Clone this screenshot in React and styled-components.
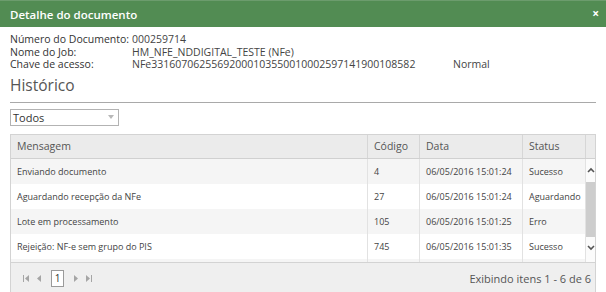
import React from 'react';
import styled, { createGlobalStyle } from 'styled-components';

const Global = createGlobalStyle`
  html, body { margin: 0; padding: 0; background: #fff; }
  body { font-family: "Open Sans", "Liberation Sans", sans-serif; color: #333; }
`;

const Dialog = styled.div`width: 606px; height: 292px; overflow: hidden; background: #fff;`;

const TitleBar = styled.div`
  display: flex; align-items: center; justify-content: space-between;
  height: 27px; padding: 0 7px 0 10px; background: #528c53; color: #fff;
  border-top: 1px solid #6c9c6d; box-sizing: border-box;
`;

const Title = styled.span`font-size: 11.5px; font-weight: 600;`;

const Close = styled.span`font-size: 12px; font-weight: 700; line-height: 1;`;

const Content = styled.div`padding: 6px 10px 0;`;

const Info = styled.div`
  display: grid; grid-template-columns: 122px 321px auto;
  font-size: 10.5px; line-height: 12.5px; color: #333; white-space: nowrap;
`;

const Label = styled.span``;
const Value = styled.span`color: #444;`;

const Heading = styled.h2`
  margin: 3px 0 0; padding-bottom: 6px; font-size: 15.5px; font-weight: 400;
  line-height: 22px; color: #555; border-bottom: 1px solid #a9a9a9;
`;

const Select = styled.div`
  display: flex; align-items: center; justify-content: space-between;
  width: 109px; height: 17px; margin-top: 6px; box-sizing: border-box;
  border: 1px solid #b3b3b3; padding: 0 4px 0 2px;
  font-size: 11px; color: #333;
`;

const Arrow = styled.span`
  width: 0; height: 0; border-left: 3px solid transparent; border-right: 3px solid transparent;
  border-top: 4px solid #b8b8b8;
`;

const Grid = styled.div`
  margin-top: 8px; border: 1px solid #d3d3d3; border-bottom: none;
`;

const cols = '356px 52px 103px 63px 1fr';

const HeadRow = styled.div`
  display: grid; grid-template-columns: ${cols}; height: 23px;
  background: #ebebeb; border-bottom: 1px solid #d0d0d0;
`;

const HeadCell = styled.div`
  display: flex; align-items: center; padding-left: 6px; font-size: 10.5px; color: #555;
  border-left: ${p => (p.first ? 'none' : '1px solid #d6d6d6')};
`;

const BodyWrap = styled.div`display: flex; height: 103px; overflow: hidden;`;

const Rows = styled.div`flex: 1;`;

const Row = styled.div`
  display: grid; grid-template-columns: 356px 52px 103px 63px; height: 25px;
  background: ${p => (p.alt ? '#f5f5f5' : '#fff')};
`;

const Cell = styled.div`
  display: flex; align-items: center; padding-left: 6px; font-size: 9px; color: #444;
  white-space: nowrap; overflow: hidden;
  border-left: ${p => (p.first ? 'none' : '1px solid #e2e2e2')};
`;

const Scrollbar = styled.div`
  display: flex; flex-direction: column; align-items: center; width: 11px;
  border-left: 1px solid #e2e2e2; background: #fbfbfb;
`;

const ScrollBtn = styled.div`
  display: flex; align-items: center; justify-content: center; height: 23px; width: 100%;
`;

const Thumb = styled.div`width: 100%; height: 55px; background: #cdcdcd;`;

const Footer = styled.div`
  display: flex; align-items: center; justify-content: space-between;
  height: 31px; padding: 0 4px 0 12px; background: #efefef;
  border: 1px solid #d3d3d3; border-bottom: none;
`;

const Pager = styled.div`display: flex; align-items: center; gap: 6px;`;

const PageIcon = styled.svg`width: 7px; height: 7px; fill: #a5a5a5;`;

const PageNum = styled.span`
  display: inline-flex; align-items: center; justify-content: center;
  width: 11px; height: 15px; border: 1px solid #9a9a9a; background: #fff;
  font-size: 10px; color: #333; margin: 0 2px;
`;

const Summary = styled.span`font-size: 11px; color: #555;`;

// only the rows in view; the rest sit below the scroll fold
const rows = [
  ['Enviando documento', '4', '06/05/2016 15:01:24', 'Sucesso'],
  ['Aguardando recepção da NFe', '27', '06/05/2016 15:01:24', 'Aguardando'],
  ['Lote em processamento', '105', '06/05/2016 15:01:25', 'Erro'],
  ['Rejeição: NF-e sem grupo do PIS', '745', '06/05/2016 15:01:35', 'Sucesso'],
  ['', '', '', ''],
];

const Chevron = ({ up }) => (
  <svg width="8" height="6" viewBox="0 0 8 6">
    <path d={up ? 'M1 5 L4 2 L7 5' : 'M1 1 L4 4 L7 1'} stroke="#555" strokeWidth="1.6" fill="none" />
  </svg>
);

export default function App() {
  return (
    <>
      <Global />
      <Dialog>
        <TitleBar>
          <Title>Detalhe do documento</Title>
          <Close>×</Close>
        </TitleBar>
        <Content>
          <Info>
            <Label>Número do Documento:</Label><Value>000259714</Value><span />
            <Label>Nome do Job:</Label><Value>HM_NFE_NDDIGITAL_TESTE (NFe)</Value><span />
            <Label>Chave de acesso:</Label><Value>NFe33160706255692000103550010002597141900108582</Value><Value>Normal</Value>
          </Info>
          <Heading>Histórico</Heading>
          <Select>
            <span>Todos</span>
            <Arrow />
          </Select>
          <Grid>
            <HeadRow>
              <HeadCell first>Mensagem</HeadCell>
              <HeadCell>Código</HeadCell>
              <HeadCell>Data</HeadCell>
              <HeadCell>Status</HeadCell>
              <HeadCell />
            </HeadRow>
            <BodyWrap>
              <Rows>
                {rows.map((r, i) => (
                  <Row key={i} alt={i % 2 === 0}>
                    <Cell first>{r[0]}</Cell>
                    <Cell>{r[1]}</Cell>
                    <Cell>{r[2]}</Cell>
                    <Cell>{r[3]}</Cell>
                  </Row>
                ))}
              </Rows>
              <Scrollbar>
                <ScrollBtn><Chevron up /></ScrollBtn>
                <Thumb />
                <ScrollBtn><Chevron /></ScrollBtn>
              </Scrollbar>
            </BodyWrap>
          </Grid>
          <Footer>
            <Pager>
              <PageIcon viewBox="0 0 7 7"><rect x="0" y="0" width="1" height="7" /><path d="M6 0 L2 3.5 L6 7Z" /></PageIcon>
              <PageIcon viewBox="0 0 7 7"><path d="M5 0 L1 3.5 L5 7Z" /></PageIcon>
              <PageNum>1</PageNum>
              <PageIcon viewBox="0 0 7 7"><path d="M2 0 L6 3.5 L2 7Z" /></PageIcon>
              <PageIcon viewBox="0 0 7 7"><path d="M1 0 L5 3.5 L1 7Z" /><rect x="6" y="0" width="1" height="7" /></PageIcon>
            </Pager>
            <Summary>Exibindo itens 1 - 6 de 6</Summary>
          </Footer>
        </Content>
      </Dialog>
    </>
  );
}
